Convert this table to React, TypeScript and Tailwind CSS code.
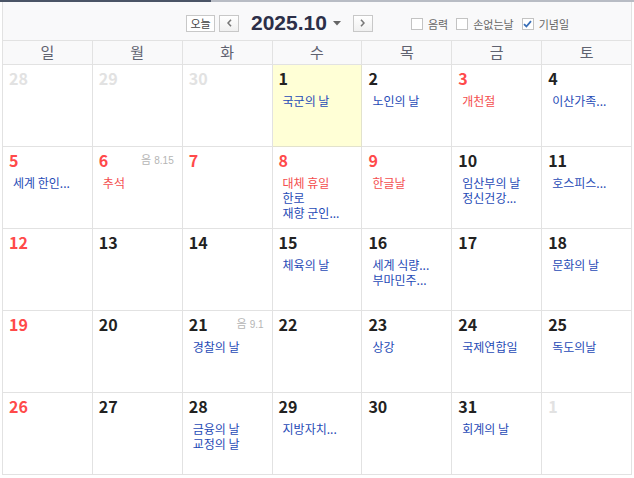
import React from "react";

type Ev = { t: string; red?: boolean };
type Day = { n: number; muted?: boolean; red?: boolean; today?: boolean; lunar?: string; ev?: Ev[] };

const weeks: Day[][] = [
  [
    { n: 28, muted: true },
    { n: 29, muted: true },
    { n: 30, muted: true },
    { n: 1, today: true, ev: [{ t: "국군의 날" }] },
    { n: 2, ev: [{ t: "노인의 날" }] },
    { n: 3, red: true, ev: [{ t: "개천절", red: true }] },
    { n: 4, ev: [{ t: "이산가족..." }] },
  ],
  [
    { n: 5, red: true, ev: [{ t: "세계 한인..." }] },
    { n: 6, red: true, lunar: "8.15", ev: [{ t: "추석", red: true }] },
    { n: 7, red: true },
    { n: 8, red: true, ev: [{ t: "대체 휴일", red: true }, { t: "한로" }, { t: "재향 군인..." }] },
    { n: 9, red: true, ev: [{ t: "한글날", red: true }] },
    { n: 10, ev: [{ t: "임산부의 날" }, { t: "정신건강..." }] },
    { n: 11, ev: [{ t: "호스피스..." }] },
  ],
  [
    { n: 12, red: true },
    { n: 13 },
    { n: 14 },
    { n: 15, ev: [{ t: "체육의 날" }] },
    { n: 16, ev: [{ t: "세계 식량..." }, { t: "부마민주..." }] },
    { n: 17 },
    { n: 18, ev: [{ t: "문화의 날" }] },
  ],
  [
    { n: 19, red: true },
    { n: 20 },
    { n: 21, lunar: "9.1", ev: [{ t: "경찰의 날" }] },
    { n: 22 },
    { n: 23, ev: [{ t: "상강" }] },
    { n: 24, ev: [{ t: "국제연합일" }] },
    { n: 25, ev: [{ t: "독도의날" }] },
  ],
  [
    { n: 26, red: true },
    { n: 27 },
    { n: 28, ev: [{ t: "금융의 날" }, { t: "교정의 날" }] },
    { n: 29, ev: [{ t: "지방자치..." }] },
    { n: 30 },
    { n: 31, ev: [{ t: "회계의 날" }] },
    { n: 1, muted: true },
  ],
];

const weekdays = ["일", "월", "화", "수", "목", "금", "토"];

const KR = { fontFamily: '"Noto Sans CJK KR", "Noto Sans", sans-serif' };

function CheckBox({ checked, label }: { checked?: boolean; label: string }) {
  return (
    <div className="flex items-center gap-[5px]">
      <div className="w-[12px] h-[12px] border border-[#c3c3c3] bg-white flex items-center justify-center">
        {checked && (
          <svg width="9" height="8" viewBox="0 0 9 8">
            <path d="M1 4.2 L3.4 6.5 L8 1.2" fill="none" stroke="#3a6fb8" strokeWidth="1.8" />
          </svg>
        )}
      </div>
      <span className="text-[11px] leading-[12px] text-[#666]">{label}</span>
    </div>
  );
}

function NavBtn({ dir }: { dir: "l" | "r" }) {
  return (
    <div className="w-[20px] h-[17px] border border-[#c8c8c8] bg-gradient-to-b from-white to-[#f0f0f0] flex items-center justify-center">
      <svg width="5" height="8" viewBox="0 0 5 8">
        {dir === "l" ? (
          <path d="M4 0.8 L1 4 L4 7.2" fill="none" stroke="#777" strokeWidth="1.6" />
        ) : (
          <path d="M1 0.8 L4 4 L1 7.2" fill="none" stroke="#777" strokeWidth="1.6" />
        )}
      </svg>
    </div>
  );
}

export default function App() {
  return (
    <div className="w-[634px] h-[478px] bg-white overflow-hidden" style={KR}>
      <div className="flex h-[2px]">
        <div className="w-[211px] bg-[#4a5466]" />
        <div className="flex-1 bg-[#b8bcc4]" />
      </div>
      <div className="mx-[2px] border-l border-[#e2e2e2]">
        {/* header */}
        <div className="h-[38px] bg-[#f9f9fa] border-r border-[#e2e2e2] flex items-center relative">
          <div className="flex items-center ml-[183px] mt-[4px]">
            <div className="w-[29px] h-[17px] border border-[#c8c8c8] bg-white flex items-center justify-center text-[11px] leading-[12px] text-[#444]">
              오늘
            </div>
            <div className="ml-[4px]">
              <NavBtn dir="l" />
            </div>
            <div
              className="ml-[12px] text-[21px] leading-[22px] font-bold text-[#2c2f48]"
              style={{ fontFamily: '"Liberation Sans", Arial, sans-serif' }}
            >
              2025.10
            </div>
            <svg className="ml-[6px]" width="8" height="5" viewBox="0 0 8 5">
              <path d="M0 0 L8 0 L4 4.5 Z" fill="#666" />
            </svg>
            <div className="ml-[12px]">
              <NavBtn dir="r" />
            </div>
            <div className="flex items-center ml-[38px] mt-[2px] gap-[8px]">
              <CheckBox label="음력" />
              <CheckBox label="손없는날" />
              <CheckBox checked label="기념일" />
            </div>
          </div>
        </div>
        {/* weekday header */}
        <div className="grid grid-cols-7 border-t border-[#e2e2e2] bg-[#f9f9fa]">
          {weekdays.map((w) => (
            <div
              key={w}
              className="h-[24px] border-r border-b border-[#e2e2e2] flex items-center justify-center text-[15px] text-[#5f6270]"
            >
              {w}
            </div>
          ))}
        </div>
        {/* weeks */}
        {weeks.map((wk, i) => (
          <div key={i} className="grid grid-cols-7">
            {wk.map((d, j) => {
              const numColor = d.muted ? "text-[#e2e2e2]" : d.red ? "text-[#ff4a4a]" : "text-[#222]";
              return (
                <div
                  key={j}
                  className={
                    "h-[82px] border-r border-b " +
                    (d.today ? "bg-[#ffffd6] border-[#e2e2cc]" : "bg-white border-[#e2e2e2]")
                  }
                >
                  <div className="flex items-start justify-between pt-[3px] pl-[6px] pr-[8px]">
                    <span className={"text-[16px] leading-[20px] font-bold " + numColor}>{d.n}</span>
                    {d.lunar && (
                      <span className="flex items-baseline gap-[3px] text-[#b5b5b5] mt-[3px]">
                        <span className="text-[11px] leading-[12px]">음</span>
                        <span
                          className="text-[10px] leading-[12px]"
                          style={{ fontFamily: '"Liberation Sans", Arial, sans-serif' }}
                        >
                          {d.lunar}
                        </span>
                      </span>
                    )}
                  </div>
                  {d.ev && (
                    <div className="mt-[5px] pl-[10px] flex flex-col">
                      {d.ev.map((e, k) => (
                        <div
                          key={k}
                          className={
                            "text-[12px] leading-[15px] whitespace-nowrap " +
                            (e.red ? "text-[#f44e4e]" : "text-[#1f4bb6]")
                          }
                        >
                          {e.t}
                        </div>
                      ))}
                    </div>
                  )}
                </div>
              );
            })}
          </div>
        ))}
      </div>
    </div>
  );
}
